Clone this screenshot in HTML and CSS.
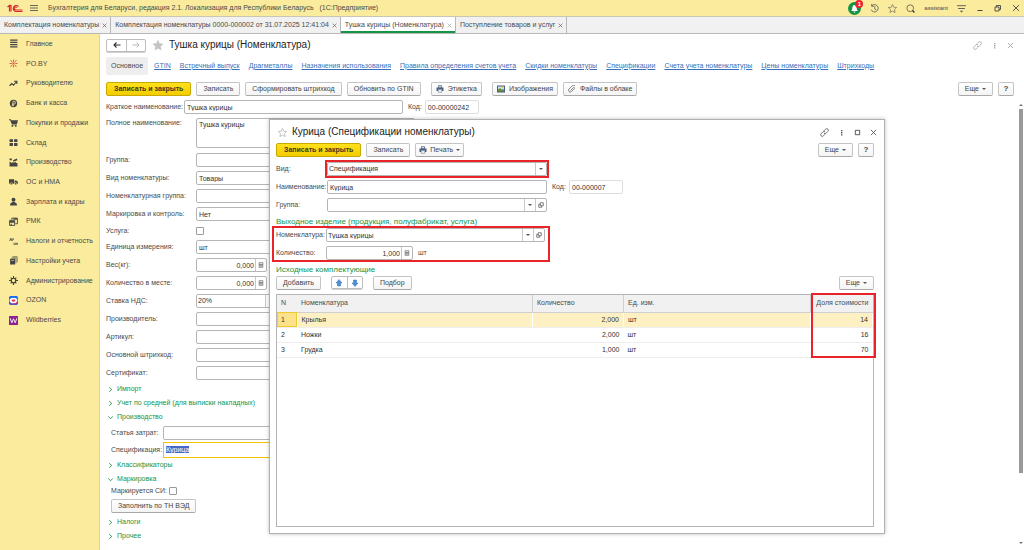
FILE: index.html
```
<!DOCTYPE html>
<html lang="ru">
<head>
    <meta charset="UTF-8">
    <meta name="viewport" content="width=device-width, initial-scale=1.0">
    <title>Бухгалтерия для Беларуси</title>
    <link rel="stylesheet" href="styles.css">
</head>
<body>
    <!-- Shared icons -->
    <svg class="icon-defs" aria-hidden="true">
        <symbol id="i-link" viewBox="0 0 16 16"><g fill="none" stroke="currentColor" stroke-width="1.3"><path d="M7 5l3-3a2.6 2.6 0 0 1 4 4l-3 3a2.6 2.6 0 0 1-4 0"/><path d="M9 11l-3 3a2.6 2.6 0 0 1-4-4l3-3a2.6 2.6 0 0 1 4 0"/></g></symbol>
        <symbol id="i-dots" viewBox="0 0 16 16"><path fill="currentColor" d="M7 2h3v3H7zM7 7h3v3H7zM7 12h3v3H7z"/></symbol>
        <symbol id="i-close" viewBox="0 0 16 16"><path stroke="currentColor" stroke-width="1.8" d="M2 2l12 12M14 2L2 14"/></symbol>
        <symbol id="i-print" viewBox="0 0 16 16"><path fill="#4a5f7d" d="M4 1h8v4H4zM1 5h14v7h-3V9H4v3H1z"/><path fill="#fff" stroke="#4a5f7d" d="M4.500 9.500h7v5h-7zM5 2h6v3H5z"/></symbol>
        <symbol id="i-calc" viewBox="0 0 16 16"><path fill="#777" d="M2 1h12v14H2z"/><path fill="#fff" d="M4 3h8v2H4zM4 7h2v2H4zM7 7h2v2H7zM10 7h2v2h-2zM4 11h2v2H4zM7 11h2v2H7zM10 11h2v2h-2z"/></symbol>
        <symbol id="i-open" viewBox="0 0 16 16"><path fill="none" stroke="#555" stroke-width="2" d="M6 2h8v8H6zM6 6H2v8h8v-4"/></symbol>
        <symbol id="i-right" viewBox="0 0 16 16"><path fill="none" stroke="currentColor" stroke-width="2.800" d="M4 1l8 7-8 7"/></symbol>
        <symbol id="i-down" viewBox="0 0 16 16"><path fill="none" stroke="currentColor" stroke-width="2.800" d="M0 4l8 8 8-8"/></symbol>
        <symbol id="i-star" viewBox="0 0 16 16"><path d="M8 .8l2.200 4.900 5.200.6-3.900 3.600 1.100 5.300L8 12.500l-4.600 2.700 1.100-5.300L.6 6.300l5.200-.6z"/></symbol>
    </svg>

    <!-- Title bar -->
    <header class="titlebar">
        <svg class="logo" viewBox="0 0 32 18"><g fill="none" stroke="#d8282f" stroke-width="2.400"><path d="M1 6l4-3v12M8 15V3H5"/><path d="M23 5a6 6 0 1 0-5 10h13"/><path d="M20 7a3 3 0 1 0-2 5h13"/></g></svg>
        <svg class="menu-icon" viewBox="0 0 16 16"><path stroke="#555" stroke-width="1.800" d="M0 3h16M0 8h16M0 13h16"/></svg>
        <h1>Бухгалтерия для Беларуси, редакция 2.1. Локализация для Республики Беларусь &nbsp; (1С:Предприятие)</h1>
        <div class="title-tools">
            <button class="bell" aria-label="Оповещения"><svg viewBox="0 0 26 26"><circle cx="13" cy="13" r="13" fill="#159447"/><path fill="#fff" d="M6 18c3-2 2-5 3-8a4 4 0 0 1 8 0c1 3 0 6 3 8zM11 19h4l-2 3z"/></svg><span class="badge">1</span></button>
            <button aria-label="История"><svg viewBox="0 0 16 16"><g fill="none" stroke="#555" stroke-width="1.400"><path d="M3 3.500A6.500 6.500 0 1 1 2 10M3 0v4h4M8.500 4v5l3 2"/></g></svg></button>
            <button aria-label="Избранное"><svg class="star-line" viewBox="0 0 16 16"><use href="#i-star"/></svg></button>
            <button aria-label="Поиск"><svg viewBox="0 0 16 16"><circle cx="7.500" cy="7.500" r="6" fill="none" stroke="#555" stroke-width="1.400"/><path stroke="#333" stroke-width="2.200" d="M11.500 11.500L15 15"/></svg></button>
            <span class="user">assistant</span>
            <button aria-label="Настройки"><svg viewBox="0 0 16 16"><path stroke="#555" stroke-width="1.600" d="M0 3h16M2 8h12"/><path fill="#555" d="M5 12h6l-3 3z"/></svg></button>
            <button class="win" aria-label="Свернуть"><svg viewBox="0 0 16 16"><path stroke="#444" stroke-width="2" d="M3 13h10"/></svg></button>
            <button class="win" aria-label="Восстановить"><svg viewBox="0 0 16 16"><path fill="none" stroke="#444" stroke-width="1.800" d="M2 6h8v8H2zM5 6V3h8v8h-3"/></svg></button>
            <button class="win" aria-label="Закрыть"><svg viewBox="0 0 16 16"><use href="#i-close"/></svg></button>
        </div>
    </header>

    <!-- Open windows -->
    <nav class="tabs">
        <div class="tab"><a href="#">Комплектация номенклатуры</a><button aria-label="Закрыть"><svg viewBox="0 0 16 16"><use href="#i-close"/></svg></button></div>
        <div class="tab"><a href="#">Комплектация номенклатуры 0000-000002 от 31.07.2025 12:41:04</a><button aria-label="Закрыть"><svg viewBox="0 0 16 16"><use href="#i-close"/></svg></button></div>
        <div class="tab active"><a href="#">Тушка курицы (Номенклатура)</a><button aria-label="Закрыть"><svg viewBox="0 0 16 16"><use href="#i-close"/></svg></button></div>
        <div class="tab"><a href="#">Поступление товаров и услуг</a><button aria-label="Закрыть"><svg viewBox="0 0 16 16"><use href="#i-close"/></svg></button></div>
    </nav>

    <div class="workspace">
        <!-- Sections -->
        <aside class="sidebar">
            <ul>
                <li><svg viewBox="0 0 16 16"><path stroke="#444" stroke-width="2" d="M2 2h13M2 6h13M2 10h13M2 14h13"/></svg><a href="#">Главное</a></li>
                <li><svg viewBox="0 0 16 16"><g stroke="#e2483d" stroke-width="1.600"><path d="M8 1v4M8 11v4M1 8h4M11 8h4M3 2l3 4M13 2l-3 4M3 14l3-4M13 14l-3-4"/></g><circle cx="8" cy="8" r="1.800" fill="#e2483d"/></svg><a href="#">PO.BY</a></li>
                <li><svg viewBox="0 0 16 16"><path fill="none" stroke="#444" stroke-width="2" d="M1 12l4-4 3 3 6-7M9 4h5v5"/></svg><a href="#">Руководителю</a></li>
                <li><svg viewBox="0 0 16 16"><circle cx="8" cy="8" r="6.500" fill="#444"/><path fill="none" stroke="#fbeb9d" stroke-width="1.400" d="M7 13V4h2a2 2 0 0 1 0 5H5M5 11h4"/></svg><a href="#">Банк и касса</a></li>
                <li><svg viewBox="0 0 16 16"><path fill="#444" d="M0 2h3l1 2h12l-2 7H5L2 4H0zM5 12h9v1H5z"/><circle cx="6" cy="14" r="1.600" fill="#444"/><circle cx="12" cy="14" r="1.600" fill="#444"/></svg><a href="#">Покупки и продажи</a></li>
                <li><svg viewBox="0 0 16 16"><path fill="#444" d="M1 2h6v5H1zM9 2h6v5H9zM1 9h6v5H1zM9 9h6v5H9z"/></svg><a href="#">Склад</a></li>
                <li><svg viewBox="0 0 16 16"><path fill="#444" d="M1 15V6l4 3 3-3v3l4-3v3h3v6zM1 1h4v3H1zM7 4l7-3 1 3-7 2z"/></svg><a href="#">Производство</a></li>
                <li><svg viewBox="0 0 16 16"><path fill="#444" d="M0 4h9v8H0zM10 6h3l3 3v3h-6z"/><circle cx="4" cy="12" r="2" fill="#444" stroke="#fbeb9d"/><circle cx="12" cy="12" r="2" fill="#444" stroke="#fbeb9d"/></svg><a href="#">ОС и НМА</a></li>
                <li><svg viewBox="0 0 16 16"><circle cx="8" cy="5" r="3.500" fill="#444"/><path fill="#444" d="M2 15v-3l4-3h4l4 3v3z"/></svg><a href="#">Зарплата и кадры</a></li>
                <li><svg viewBox="0 0 16 16"><path fill="none" stroke="#444" stroke-width="1.600" d="M1 6h9v9H1zM5 5V2h10v10h-4"/><path fill="#444" d="M1 7h9v3H1zM8 2h6v3H8zM3 12h2v2H3z"/></svg><a href="#">РМК</a></li>
                <li><svg viewBox="0 0 16 16"><g fill="none" stroke="#444" stroke-width="1.200"><path d="M1 7l2-5 2 5M2 5h3M6 7V3h2v2M9 13h3v-3M9 10v3l-1 1M13 14v-3h2v3"/></g></svg><a href="#">Налоги и отчетность</a></li>
                <li><svg viewBox="0 0 16 16"><path fill="#444" d="M2 5h9v10H2zM4 3h9v10h-1V4H4zM6 1h9v10h-1V2H6z"/><path stroke="#fbeb9d" d="M4 8h5"/></svg><a href="#">Настройки учета</a></li>
                <li><svg viewBox="0 0 16 16"><circle cx="8" cy="8" r="4" fill="none" stroke="#444" stroke-width="2.200"/><path stroke="#444" stroke-width="2" d="M8 0v4M8 12v4M0 8h4M12 8h4M3 3l2 2M11 11l2 2M13 3l-2 2M5 11l-2 2"/></svg><a href="#">Администрирование</a></li>
                <li><svg viewBox="0 0 16 16"><rect width="16" height="16" rx="3" fill="#1668f2"/><ellipse cx="8" cy="8" rx="7" ry="5" fill="#fff"/><path fill="#f1285c" d="M1 10c3 5 10 5 14-1 1 7-11 9-14 1z"/><ellipse cx="8" cy="8" rx="3.500" ry="2" fill="#f1285c"/></svg><a href="#">OZON</a></li>
                <li><svg viewBox="0 0 16 16"><rect width="16" height="16" rx="1" fill="#8b2192"/><path fill="none" stroke="#fff" stroke-width="1.600" d="M2 4l3 8 3-7 3 7 3-8"/></svg><a href="#">Wildberries</a></li>
            </ul>
        </aside>

        <!-- Item card -->
        <main class="card">
            <div class="card-title">
                <div class="button-pair">
                    <button aria-label="Назад"><svg viewBox="0 0 16 16"><path fill="none" stroke="#333" stroke-width="2.200" d="M15 8H2M7 3L2 8l5 5"/></svg></button>
                    <button aria-label="Вперед"><svg viewBox="0 0 16 16"><path fill="none" stroke="#aaa" stroke-width="1.600" d="M1 8h13M9 3l5 5-5 5"/></svg></button>
                </div>
                <svg class="star-full" viewBox="0 0 16 16"><use href="#i-star"/></svg>
                <h2>Тушка курицы (Номенклатура)</h2>
                <div class="window-tools muted">
                    <button aria-label="Ссылка"><svg class="link-icon" viewBox="0 0 16 16"><use href="#i-link"/></svg></button>
                    <button aria-label="Меню"><svg viewBox="0 0 16 16"><use href="#i-dots"/></svg></button>
                    <button aria-label="Закрыть"><svg viewBox="0 0 16 16"><use href="#i-close"/></svg></button>
                </div>
            </div>

            <nav class="links">
                <a class="current" href="#">Основное</a>
                <a href="#">GTIN</a>
                <a href="#">Встречный выпуск</a>
                <a href="#">Драгметаллы</a>
                <a href="#">Назначения использования</a>
                <a href="#">Правила определения счетов учета</a>
                <a href="#">Скидки номенклатуры</a>
                <a href="#">Спецификации</a>
                <a href="#">Счета учета номенклатуры</a>
                <a href="#">Цены номенклатуры</a>
                <a href="#">Штрихкоды</a>
            </nav>

            <div class="toolbar">
                <button class="btn primary">Записать и закрыть</button>
                <button class="btn">Записать</button>
                <button class="btn">Сформировать штрихкод</button>
                <button class="btn">Обновить по GTIN</button>
                <button class="btn with-icon spaced"><svg viewBox="0 0 16 16"><use href="#i-print"/></svg>Этикетка</button>
                <button class="btn with-icon spaced"><svg viewBox="0 0 16 16"><path fill="#4a5f7d" d="M0 1h16v14H0z"/><path fill="#cfe3f5" d="M2 3h12v6H2z"/><path fill="#6e8f3c" d="M2 13V9l4-3 4 4 2-1 2 2v2z"/><circle cx="11" cy="5" r="1.500" fill="#f2c230"/></svg>Изображения</button>
                <button class="btn with-icon"><svg viewBox="0 0 16 16"><path fill="none" stroke="#666" stroke-width="1.600" d="M5 11l6-6a1.800 1.800 0 0 1 2 2l-6 6a3.300 3.300 0 0 1-5-5l6-6a4 4 0 0 1 6 0"/></svg>Файлы в облаке</button>
                <div class="toolbar-end">
                    <button class="btn more">Еще<i class="caret"></i></button>
                    <button class="btn help">?</button>
                </div>
            </div>

            <form class="item-form">
                <div class="row name-row">
                    <label for="shortName">Краткое наименование:</label>
                    <input type="text" id="shortName" class="wide" value="Тушка курицы">
                    <label for="code">Код:</label>
                    <input type="text" id="code" class="code" value="00-00000242">
                </div>
                <div class="row tall">
                    <label for="fullName">Полное наименование:</label>
                    <textarea id="fullName">Тушка курицы</textarea>
                </div>
                <div class="row"><label for="group">Группа:</label><input type="text" id="group"></div>
                <div class="row"><label for="kind">Вид номенклатуры:</label><input type="text" id="kind" value="Товары"></div>
                <div class="row"><label for="nomGroup">Номенклатурная группа:</label><input type="text" id="nomGroup"></div>
                <div class="row"><label for="marking">Маркировка и контроль:</label><input type="text" id="marking" value="Нет"></div>
                <div class="row short"><label for="service">Услуга:</label><input type="checkbox" id="service"></div>
                <div class="row"><label for="unit">Единица измерения:</label><input type="text" id="unit" value="шт"></div>
                <div class="row"><label for="weight">Вес(кг):</label><div class="field number"><input type="text" id="weight" value="0,000"><button type="button" aria-label="Калькулятор"><svg viewBox="0 0 16 16"><use href="#i-calc"/></svg></button></div></div>
                <div class="row"><label for="places">Количество в месте:</label><div class="field number"><input type="text" id="places" value="0,000"><button type="button" aria-label="Калькулятор"><svg viewBox="0 0 16 16"><use href="#i-calc"/></svg></button></div></div>
                <div class="row"><label for="vat">Ставка НДС:</label><div class="field vat"><select id="vat"><option>20%</option></select><button type="button" aria-label="Выбрать"><i class="caret"></i></button></div></div>
                <div class="row"><label for="maker">Производитель:</label><input type="text" id="maker"></div>
                <div class="row"><label for="article">Артикул:</label><input type="text" id="article"></div>
                <div class="row"><label for="barcode">Основной штрихкод:</label><input type="text" id="barcode"></div>
                <div class="row"><label for="cert">Сертификат:</label><input type="text" id="cert"></div>

                <button type="button" class="section"><svg viewBox="0 0 16 16"><use href="#i-right"/></svg>Импорт</button>
                <button type="button" class="section"><svg viewBox="0 0 16 16"><use href="#i-right"/></svg>Учет по средней (для выписки накладных)</button>
                <button type="button" class="section"><svg viewBox="0 0 16 16"><use href="#i-down"/></svg>Производство</button>
                <div class="row inner"><label for="cost">Статья затрат:</label><input type="text" id="cost"></div>
                <div class="row inner"><label for="spec">Спецификация:</label><input type="text" id="spec" class="focused" value="Курица"></div>
                <button type="button" class="section"><svg viewBox="0 0 16 16"><use href="#i-right"/></svg>Классификаторы</button>
                <button type="button" class="section"><svg viewBox="0 0 16 16"><use href="#i-down"/></svg>Маркировка</button>
                <div class="row inner check"><label for="marked">Маркируется СИ:</label><input type="checkbox" id="marked"></div>
                <button type="button" class="btn fill">Заполнить по ТН ВЭД</button>
                <button type="button" class="section"><svg viewBox="0 0 16 16"><use href="#i-right"/></svg>Налоги</button>
                <button type="button" class="section"><svg viewBox="0 0 16 16"><use href="#i-right"/></svg>Прочее</button>
            </form>

            <div class="scrollbar"><i class="arrow-up"></i><div class="thumb"></div><i class="arrow-down"></i></div>
        </main>
    </div>

    <!-- Specification window -->
    <section class="dialog">
        <div class="dialog-title">
            <svg class="star-empty" viewBox="0 0 16 16"><use href="#i-star"/></svg>
            <h2>Курица (Спецификации номенклатуры)</h2>
            <div class="window-tools">
                <button aria-label="Ссылка"><svg class="link-icon" viewBox="0 0 16 16"><use href="#i-link"/></svg></button>
                <button aria-label="Меню"><svg viewBox="0 0 16 16"><use href="#i-dots"/></svg></button>
                <button aria-label="Развернуть"><svg viewBox="0 0 16 16"><path fill="none" stroke="currentColor" stroke-width="2" d="M3 3h10v10H3z"/></svg></button>
                <button aria-label="Закрыть"><svg viewBox="0 0 16 16"><use href="#i-close"/></svg></button>
            </div>
        </div>
        <div class="toolbar">
            <button class="btn primary">Записать и закрыть</button>
            <button class="btn">Записать</button>
            <button class="btn with-icon print"><svg viewBox="0 0 16 16"><use href="#i-print"/></svg>Печать<i class="caret"></i></button>
            <div class="toolbar-end">
                <button class="btn more">Еще<i class="caret"></i></button>
                <button class="btn help">?</button>
            </div>
        </div>

        <form class="spec-form">
            <div class="row">
                <label for="type">Вид:</label>
                <div class="field marked"><select id="type"><option>Спецификация</option></select><button type="button" aria-label="Выбрать"><i class="caret"></i></button></div>
            </div>
            <div class="row">
                <label for="specName">Наименование:</label>
                <input type="text" id="specName" class="field" value="Курица">
                <label for="specCode" class="code-label">Код:</label>
                <input type="text" id="specCode" class="code" value="00-000007">
            </div>
            <div class="row">
                <label for="specGroup">Группа:</label>
                <div class="field"><input type="text" id="specGroup"><button type="button" aria-label="Выбрать"><i class="caret"></i></button><button type="button" aria-label="Открыть"><svg viewBox="0 0 16 16"><use href="#i-open"/></svg></button></div>
            </div>
            <h3>Выходное изделие (продукция, полуфабрикат, услуга)</h3>
            <div class="output marked">
                <div class="row">
                    <label for="product">Номенклатура:</label>
                    <div class="field"><input type="text" id="product" value="Тушка курицы"><button type="button" aria-label="Выбрать"><i class="caret"></i></button><button type="button" aria-label="Открыть"><svg viewBox="0 0 16 16"><use href="#i-open"/></svg></button></div>
                </div>
                <div class="row">
                    <label for="amount">Количество:</label>
                    <div class="field number"><input type="text" id="amount" value="1,000"><button type="button" aria-label="Калькулятор"><svg viewBox="0 0 16 16"><use href="#i-calc"/></svg></button></div>
                    <span>шт</span>
                </div>
            </div>
        </form>

        <h3>Исходные комплектующие</h3>
        <div class="toolbar table-tools">
            <button class="btn">Добавить</button>
            <div class="button-pair">
                <button aria-label="Вверх"><svg viewBox="0 0 16 16"><path fill="#4a90d9" stroke="#2f6fb5" d="M8 1l6 7h-3v6H5V8H2z"/></svg></button>
                <button aria-label="Вниз"><svg viewBox="0 0 16 16"><path fill="#4a90d9" stroke="#2f6fb5" d="M8 15l6-7h-3V2H5v6H2z"/></svg></button>
            </div>
            <button class="btn">Подбор</button>
            <div class="toolbar-end">
                <button class="btn more">Еще<i class="caret"></i></button>
            </div>
        </div>

        <div class="table-box">
            <table>
                <colgroup><col class="c-num"><col><col class="c-qty"><col class="c-unit"><col class="c-share"></colgroup>
                <thead>
                    <tr><th>N</th><th>Номенклатура</th><th>Количество</th><th>Ед. изм.</th><th class="num">Доля стоимости</th></tr>
                </thead>
                <tbody>
                    <tr class="selected"><td>1</td><td>Крылья</td><td class="num">2,000</td><td>шт</td><td class="num">14</td></tr>
                    <tr><td>2</td><td>Ножки</td><td class="num">2,000</td><td>шт</td><td class="num">16</td></tr>
                    <tr><td>3</td><td>Грудка</td><td class="num">1,000</td><td>шт</td><td class="num">70</td></tr>
                </tbody>
            </table>
            <div class="share-mark"></div>
        </div>
    </section>

    <script>
        // Keep the specification field active with its text selected
        var spec = document.getElementById('spec');
        spec.focus();
        spec.select();
    </script>
</body>
</html>
```
FILE: styles.css
```
* {
    box-sizing: border-box;
    margin: 0;
    padding: 0;
    font-family: "Liberation Sans", Arial, sans-serif;
}

body {
    display: flex;
    flex-direction: column;
    height: 100vh;
    overflow: hidden;
    position: relative;
    font-size: 7px;
    line-height: 10px;
    color: #4a4a4a;
    background-color: #ffffff;
}

a {
    color: inherit;
    text-decoration: none;
}

button {
    border: none;
    background: none;
    font-size: 7px;
    line-height: 10px;
    color: #444444;
    white-space: nowrap;
}

svg {
    display: block;
    flex: none;
    width: 8px;
    height: 8px;
}

.icon-defs {
    position: absolute;
    width: 0;
    height: 0;
}

/* Title bar */
.titlebar {
    display: flex;
    align-items: center;
    flex: none;
    height: 16px;
    padding: 0 4px 0 7px;
    background-color: #fbeb9d;
}

.titlebar h1 {
    margin-left: 10px;
    font-size: 7px;
    font-weight: normal;
}

.logo {
    width: 16px;
    height: 9px;
}

.menu-icon {
    margin-left: 7px;
}

.title-tools {
    display: flex;
    align-items: center;
    gap: 9px;
    margin-left: auto;
}

.title-tools svg {
    width: 9px;
    height: 9px;
}

.title-tools .win {
    margin-left: 1px;
}

.title-tools .win svg {
    width: 8px;
    height: 8px;
}

.title-tools .user {
    font-size: 6px;
}

.bell {
    position: relative;
}

.title-tools .bell svg {
    width: 13px;
    height: 13px;
}

.badge {
    position: absolute;
    top: -2px;
    right: -2px;
    width: 8px;
    height: 8px;
    border-radius: 4px;
    background-color: #e8232a;
    color: #ffffff;
    font-size: 6px;
    line-height: 8px;
    font-weight: bold;
}

.star-line,
.star-empty {
    fill: none;
    stroke: #555555;
}

/* Tabs */
.tabs {
    display: flex;
    flex: none;
    height: 18px;
    background-color: #f1f1f1;
    border-top: 1px solid #c9c6b4;
    border-bottom: 1px solid #b8b8b8;
}

.tab {
    display: flex;
    align-items: center;
    gap: 3px;
    padding: 0 3px 0 4px;
    border-right: 1px solid #b8b8b8;
}

.tab svg {
    width: 5px;
    height: 5px;
}

.tab.active {
    background-color: #ffffff;
    box-shadow: inset 0 -2px #159447;
}

.tab.active button {
    color: #999999;
}

.workspace {
    display: flex;
    flex: 1;
    min-height: 0;
}

/* Sections */
.sidebar {
    flex: none;
    width: 100px;
    background-color: #fbeb9d;
    border-right: 1px solid #e3d68f;
}

.sidebar ul {
    display: grid;
    grid-auto-rows: 1fr;
    min-height: 296px;
    list-style: none;
}

.sidebar li {
    display: flex;
    align-items: center;
    gap: 8px;
    padding-left: 9px;
}

.sidebar svg {
    width: 9px;
    height: 9px;
}

/* Item card */
.card {
    position: relative;
    flex: 1;
    min-width: 0;
    padding: 4px 10px 0 6px;
}

.card-title {
    display: flex;
    align-items: center;
    height: 14px;
}

h2 {
    font-size: 10px;
    line-height: 14px;
    font-weight: normal;
    color: #222222;
}

.button-pair {
    display: flex;
    height: 13px;
    border: 1px solid #bdbdbd;
    border-radius: 2px;
    box-shadow: 0 1px #d0d0d0;
}

.button-pair button {
    display: flex;
    align-items: center;
    justify-content: center;
    width: 19px;
}

.button-pair button + button {
    border-left: 1px solid #bdbdbd;
}

.star-full {
    width: 12px;
    height: 12px;
    margin: 0 5px 0 6px;
    fill: #c4c4c4;
}

.window-tools {
    display: flex;
    align-items: center;
    gap: 9px;
    margin-left: auto;
}

.window-tools svg {
    width: 7px;
    height: 7px;
}

.window-tools .link-icon {
    width: 9px;
    height: 9px;
}

.window-tools.muted button {
    color: #999999;
}

.links {
    display: flex;
    align-items: center;
    gap: 9px;
    height: 17px;
    margin-top: 5px;
    white-space: nowrap;
}

.links a {
    color: #3a6fb7;
    text-decoration: underline;
}

.links .current {
    padding: 4px 5px;
    margin-right: -3px;
    border-radius: 2px;
    background-color: #eeeeee;
    color: #4a4a4a;
    text-decoration: none;
}

.toolbar {
    display: flex;
    align-items: center;
    gap: 5px;
    height: 15px;
    margin-top: 7px;
}

.toolbar-end {
    display: flex;
    gap: 5px;
    margin-left: auto;
}

.btn {
    display: flex;
    align-items: center;
    justify-content: center;
    gap: 3px;
    height: 14px;
    padding: 0 6px;
    border: 1px solid #c4c4c4;
    border-bottom-color: #a8a8a8;
    border-radius: 2px;
    background: linear-gradient(#ffffff, #f4f4f4);
}

.btn.primary {
    padding: 0 7px;
    border-color: #c9a800;
    background: linear-gradient(#ffe11c, #f2cd00);
    color: #40381a;
    font-weight: bold;
}

.btn.with-icon {
    gap: 4px;
    padding: 0 4px;
}

.btn.print {
    gap: 3px;
    padding: 0 3px;
}

.btn.spaced {
    margin-left: 5px;
}

.btn.help {
    width: 16px;
    padding: 0;
    font-size: 8px;
    font-weight: bold;
}

.caret {
    flex: none;
    border: 2px solid transparent;
    border-top-color: #555555;
    border-bottom: none;
}

/* Fields */
.row {
    display: flex;
    align-items: center;
    height: 14px;
}

input,
select,
textarea {
    min-width: 0;
    border: 1px solid #b5b5b5;
    border-radius: 2px;
    outline: none;
    background-color: #ffffff;
    color: #333333;
    font-size: 7px;
    line-height: 10px;
    appearance: none;
}

input[type="text"],
select {
    height: 14px;
    padding: 0 2px;
}

input[type="checkbox"] {
    width: 8px;
    height: 8px;
    border-color: #999999;
    border-radius: 1px;
}

.code {
    width: 54px;
}

div.field {
    display: flex;
    height: 14px;
    border: 1px solid #b5b5b5;
    border-radius: 2px;
    background-color: #ffffff;
}

div.field input,
div.field select {
    flex: 1;
    height: 12px;
    border: none;
    padding: 0 1px;
}

div.field button {
    display: flex;
    align-items: center;
    justify-content: center;
    width: 11px;
    border-left: 1px solid #c8c8c8;
}

div.field svg {
    width: 6px;
    height: 6px;
}

.number input {
    text-align: right;
}

.item-form {
    display: flex;
    flex-direction: column;
    align-items: flex-start;
    gap: 4px;
    margin-top: 4px;
}

.item-form label {
    width: 90px;
    white-space: nowrap;
}

.item-form input[type="text"],
.item-form textarea {
    width: 219px;
}

.item-form .name-row label {
    width: auto;
}

.item-form .name-row label[for="shortName"] {
    width: 78px;
}

.item-form .name-row .wide {
    margin-right: 5px;
}

.item-form .name-row input.code {
    width: 54px;
    margin-left: 3px;
    border-color: #dddddd;
}

.row.tall {
    align-items: flex-start;
    height: 31px;
}

.item-form textarea {
    height: 30px;
    padding: 1px 2px;
    resize: none;
}

.row.short {
    height: 11px;
}

.item-form .number {
    width: 71px;
}

.item-form .vat {
    width: 81px;
}

.section {
    display: flex;
    align-items: center;
    gap: 4px;
    height: 10px;
    padding-left: 2px;
    color: #159447;
}

.section svg {
    width: 5px;
    height: 5px;
}

.item-form .inner {
    height: 13px;
    margin-left: 5px;
}

.item-form .inner label {
    width: 52px;
}

.item-form .inner .focused {
    height: 16px;
    border: 1px solid #f2c500;
    border-radius: 0;
}

.focused::selection {
    background-color: #4668c8;
    color: #ffffff;
}

.item-form .check {
    height: 8px;
    margin-top: -1px;
}

.item-form .check label {
    width: 58px;
}

.fill {
    margin-left: 5px;
}

.scrollbar {
    position: absolute;
    top: 70px;
    right: 0;
    bottom: 6px;
    display: flex;
    flex-direction: column;
    align-items: center;
    gap: 3px;
    width: 7px;
}

.thumb {
    width: 4px;
    height: 364px;
    background-color: #999999;
}

.arrow-up,
.arrow-down {
    border: 2px solid transparent;
}

.arrow-up {
    border-bottom-color: #777777;
    border-top: none;
}

.arrow-down {
    margin-top: auto;
    border-top-color: #777777;
    border-bottom: none;
}

/* Specification window */
.dialog {
    position: absolute;
    left: 269px;
    top: 119px;
    display: flex;
    flex-direction: column;
    width: 616px;
    height: 415px;
    padding: 5px 10px 6px 6px;
    border: 1px solid #b0b0b0;
    background-color: #ffffff;
    box-shadow: 0 0 4px rgba(0, 0, 0, 0.25);
}

.dialog-title {
    display: flex;
    align-items: center;
    height: 14px;
}

.dialog-title .window-tools {
    margin-right: -3px;
}

.star-empty {
    width: 9px;
    height: 9px;
    margin: 0 5px 0 2px;
    stroke: #999999;
}

.dialog .toolbar {
    margin-top: 3px;
}

.spec-form {
    display: flex;
    flex-direction: column;
    gap: 4px;
    margin-top: 5px;
}

.spec-form label {
    width: 51px;
}

.spec-form .field {
    width: 220px;
}

.spec-form .code-label {
    width: 17px;
    margin-left: 5px;
}

.spec-form .code {
    border-color: #dddddd;
}

h3 {
    font-size: 8px;
    line-height: 10px;
    font-weight: normal;
    color: #159447;
}

.spec-form h3 {
    margin: 1px 0 -3px;
}

/* Red frames round the parts to fill in */
.marked {
    position: relative;
}

.marked::after {
    content: '';
    position: absolute;
    inset: -3px;
    border: 2px solid #e8232a;
    pointer-events: none;
}

.output {
    display: flex;
    flex-direction: column;
    gap: 4px;
    width: 270px;
}

.output.marked::after {
    inset: -2px -4px;
}

.spec-form .output label {
    width: 50px;
}

.spec-form .output .field {
    width: 219px;
}

.spec-form .output .number {
    width: 87px;
    margin-right: 5px;
}

.spec-form + h3 {
    margin-top: 5px;
}

.dialog .table-tools {
    gap: 10px;
    margin-top: 0;
}

.table-tools .button-pair button {
    width: 15px;
}

.table-box {
    position: relative;
    flex: 1;
    margin-top: 4px;
    border: 1px solid #b5b5b5;
}

table {
    width: 100%;
    table-layout: fixed;
    border-collapse: collapse;
}

th,
td {
    height: 15px;
    padding: 0 4px;
    border-bottom: 1px solid #eeeeee;
    text-align: left;
    font-weight: normal;
}

th {
    height: 17px;
    border-bottom-color: #d0d0d0;
    border-right: 1px solid #d0d0d0;
    background-color: #f1f1f1;
    white-space: nowrap;
}

td {
    color: #333333;
}

th:first-child {
    border-right: none;
}

th:last-child {
    border-right: none;
}

.num {
    text-align: right;
}

.c-num {
    width: 20px;
}

.c-qty {
    width: 91px;
}

.c-unit {
    width: 187px;
}

.c-share {
    width: 62px;
}

.selected td {
    background-color: #fdf1c4;
    border-right: 1px solid #ffffff;
}

.selected td:first-child {
    background-color: #fce28a;
    outline: 1px solid #f0c830;
    outline-offset: -1px;
}

.share-mark {
    position: absolute;
    top: -2px;
    right: -3px;
    width: 65px;
    height: 65px;
    border: 2px solid #e8232a;
}
```
